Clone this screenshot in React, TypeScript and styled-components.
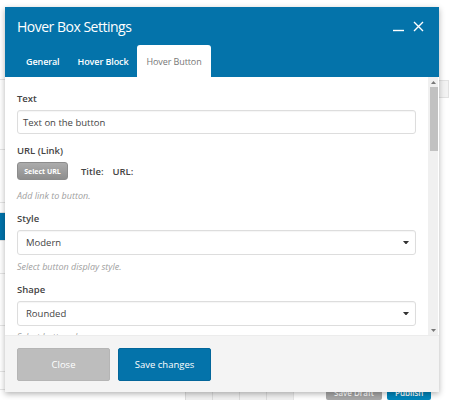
import styled, { createGlobalStyle } from "styled-components";

const GlobalStyle = createGlobalStyle`
  html, body {
    margin: 0;
    padding: 0;
    background: #ffffff;
    font-family: "Open Sans", "Liberation Sans", sans-serif;
  }
  * {
    box-sizing: border-box;
  }
`;

const Page = styled.div`
  position: relative;
  width: 449px;
  height: 400px;
  overflow: hidden;
  display: flex;
  flex-direction: column;
  background: #ffffff;
`;

const PageTop = styled.div`
  flex: 1;
  display: flex;
  flex-direction: row;
`;

const SideList = styled.div`
  width: 160px;
  display: flex;
  flex-direction: column;
  padding-top: 66px;
`;

const SideRow = styled.div<{ $h: number; $active?: boolean }>`
  height: ${(p) => p.$h}px;
  border-bottom: 1px solid #e5e5e5;
  background: ${(p) => (p.$active ? "#0073aa" : "#ffffff")};
  font-size: 9px;
  color: #555;
  padding: 2px 6px;
`;

const MainArea = styled.div`
  flex: 1;
  display: flex;
  flex-direction: column;
  align-items: flex-end;
  padding-top: 80px;
`;

const SideBox = styled.div`
  width: 12px;
  height: 18px;
  background: #f3f3f3;
  border: 1px solid #e2e2e2;
`;

const BottomBar = styled.div`
  height: 11px;
  display: flex;
  flex-direction: row;
  align-items: flex-start;
`;

const EditorTools = styled.div`
  width: 293px;
  height: 11px;
  display: flex;
  justify-content: flex-end;
  border-top: 1px solid #e5e5e5;
`;

const ToolCell = styled.div`
  width: 27px;
  height: 11px;
  background: #f1f1f1;
  border-left: 1px solid #dcdcdc;
`;

const PublishArea = styled.div`
  flex: 1;
  display: flex;
  gap: 5px;
  padding-left: 32px;
  border-left: 1px solid #e5e5e5;
`;

const WpButton = styled.div<{ $primary?: boolean }>`
  height: 14px;
  padding: 0 8px;
  margin-top: -3px;
  font-size: 8px;
  font-weight: 600;
  line-height: 14px;
  color: #ffffff;
  border-radius: 2px;
  background: ${(p) => (p.$primary ? "#0085ba" : "#a7a7a7")};
`;

const Modal = styled.div`
  position: absolute;
  top: 7px;
  left: 5px;
  width: 434px;
  height: 385px;
  display: flex;
  flex-direction: column;
  background: #ffffff;
  box-shadow: 0 2px 6px rgba(0, 0, 0, 0.3);
`;

const Header = styled.div`
  background: #0473aa;
  height: 70px;
  display: flex;
  flex-direction: column;
`;

const TitleRow = styled.div`
  height: 38px;
  display: flex;
  align-items: center;
  padding: 0 15px 0 12px;
`;

const Title = styled.div`
  flex: 1;
  color: #ffffff;
  font-size: 14px;
  letter-spacing: -0.5px;
`;

const HeaderIcons = styled.div`
  display: flex;
  align-items: center;
  gap: 9px;
`;

const Tabs = styled.div`
  height: 32px;
  display: flex;
  padding-left: 12px;
`;

const Tab = styled.div<{ $active?: boolean }>`
  height: 32px;
  padding: 0 9px;
  display: flex;
  align-items: center;
  font-size: 9px;
  letter-spacing: -0.1px;
  font-weight: ${(p) => (p.$active ? 400 : 600)};
  color: ${(p) => (p.$active ? "#777777" : "#ffffff")};
  background: ${(p) => (p.$active ? "#ffffff" : "transparent")};
  border-radius: 3px 3px 0 0;
`;

const Body = styled.div`
  flex: 1;
  display: flex;
  flex-direction: row;
  overflow: hidden;
`;

const Content = styled.div`
  flex: 1;
  padding: 14px 12px 0 12px;
  display: flex;
  flex-direction: column;
`;

const Field = styled.div<{ $space?: number }>`
  display: flex;
  flex-direction: column;
  margin-bottom: ${(p) => p.$space ?? 7}px;
`;

const Label = styled.div`
  font-size: 9.5px;
  font-weight: 600;
  color: #444444;
  line-height: 16px;
  margin-bottom: 3px;
`;

const TextBox = styled.div`
  height: 24px;
  border: 1px solid #dddddd;
  border-radius: 3px;
  box-shadow: inset 0 1px 1px rgba(0, 0, 0, 0.04);
  display: flex;
  align-items: center;
  padding: 0 5px;
  font-size: 9.5px;
  color: #444444;
`;

const SelectBox = styled(TextBox)`
  height: 25px;
  padding: 0 6px 0 8px;
  justify-content: space-between;
`;

const Hint = styled.div<{ $gap: number }>`
  margin-top: ${(p) => p.$gap}px;
  font-size: 9px;
  font-style: italic;
  color: #a0a0a0;
  line-height: 16px;
`;

const UrlRow = styled.div`
  display: flex;
  align-items: center;
  gap: 9px;
`;

const SelectUrl = styled.div`
  width: 51px;
  height: 18px;
  border: 1px solid #8c8c8c;
  border-radius: 3px;
  background: linear-gradient(#acacac, #8e8e8e);
  color: #ffffff;
  font-size: 7px;
  font-weight: 700;
  display: flex;
  align-items: center;
  justify-content: center;
  margin-right: 4px;
`;

const UrlMeta = styled.span`
  font-size: 9.5px;
  font-weight: 600;
  color: #444444;
`;

const Scrollbar = styled.div`
  width: 10px;
  margin-right: 1px;
  background: #f0f0f0;
  display: flex;
  flex-direction: column;
  align-items: center;
`;

const ScrollArrow = styled.div`
  height: 10px;
  display: flex;
  align-items: center;
  justify-content: center;
`;

const Thumb = styled.div`
  width: 8px;
  height: 64px;
  background: #c1c1c1;
  margin-left: 1px;
`;

const ScrollSpace = styled.div`
  flex: 1;
`;

const Footer = styled.div`
  height: 57px;
  background: #f4f4f4;
  border-top: 1px solid #ececec;
  display: flex;
  gap: 8px;
  padding: 12px 0 0 12px;
`;

const FooterButton = styled.div<{ $primary?: boolean }>`
  width: 93px;
  height: 33px;
  border-radius: 2px;
  display: flex;
  align-items: center;
  justify-content: center;
  font-size: 9.5px;
  color: #ffffff;
  background: ${(p) => (p.$primary ? "#0473aa" : "#bdbdbd")};
  border: 1px solid ${(p) => (p.$primary ? "#03669a" : "#b5b5b5")};
`;

function Caret({ size = 6, color = "#333" }: { size?: number; color?: string }) {
  return (
    <svg width={size} height={size * 0.6} viewBox="0 0 10 6">
      <path d="M0 0 L10 0 L5 6 Z" fill={color} />
    </svg>
  );
}

function UpCaret() {
  return (
    <svg width="5" height="3" viewBox="0 0 10 6">
      <path d="M0 6 L10 6 L5 0 Z" fill="#777" />
    </svg>
  );
}

function App() {
  return (
    <>
      <GlobalStyle />
      <Page>
        <PageTop>
          <SideList>
            <SideRow $h={14}>ow</SideRow>
            <SideRow $h={70} />
            <SideRow $h={53} />
            <SideRow $h={10} />
            <SideRow $h={28} $active />
            <SideRow $h={33} />
            <SideRow $h={52} />
            <SideRow $h={46} />
          </SideList>
          <MainArea>
            <SideBox />
          </MainArea>
        </PageTop>
        <BottomBar>
          <EditorTools>
            <ToolCell />
            <ToolCell />
            <ToolCell />
            <ToolCell />
          </EditorTools>
          <PublishArea>
            <WpButton>Save Draft</WpButton>
            <WpButton $primary>Publish</WpButton>
          </PublishArea>
        </BottomBar>

        <Modal>
          <Header>
            <TitleRow>
              <Title>Hover Box Settings</Title>
              <HeaderIcons>
                <svg width="11" height="12" viewBox="0 0 11 12">
                  <line x1="0" y1="10.5" x2="11" y2="10.5" stroke="#fff" strokeWidth="1.4" />
                </svg>
                <svg width="11" height="11" viewBox="0 0 11 11">
                  <path d="M1 1 L10 10 M10 1 L1 10" stroke="#fff" strokeWidth="1.4" />
                </svg>
              </HeaderIcons>
            </TitleRow>
            <Tabs>
              <Tab>General</Tab>
              <Tab>Hover Block</Tab>
              <Tab $active>Hover Button</Tab>
            </Tabs>
          </Header>

          <Body>
            <Content>
              <Field $space={9}>
                <Label>Text</Label>
                <TextBox>Text on the button</TextBox>
              </Field>
              <Field>
                <Label>URL (Link)</Label>
                <UrlRow>
                  <SelectUrl>Select URL</SelectUrl>
                  <UrlMeta>Title:</UrlMeta>
                  <UrlMeta>URL:</UrlMeta>
                </UrlRow>
                <Hint $gap={8}>Add link to button.</Hint>
              </Field>
              <Field>
                <Label>Style</Label>
                <SelectBox>
                  <span>Modern</span>
                  <Caret />
                </SelectBox>
                <Hint $gap={4}>Select button display style.</Hint>
              </Field>
              <Field>
                <Label>Shape</Label>
                <SelectBox>
                  <span>Rounded</span>
                  <Caret />
                </SelectBox>
                <Hint $gap={3}>Select button shape.</Hint>
              </Field>
            </Content>
            <Scrollbar>
              <ScrollArrow>
                <UpCaret />
              </ScrollArrow>
              <Thumb />
              <ScrollSpace />
              <ScrollArrow>
                <Caret size={5} color="#777" />
              </ScrollArrow>
            </Scrollbar>
          </Body>

          <Footer>
            <FooterButton>Close</FooterButton>
            <FooterButton $primary>Save changes</FooterButton>
          </Footer>
        </Modal>
      </Page>
    </>
  );
}

export default App;
